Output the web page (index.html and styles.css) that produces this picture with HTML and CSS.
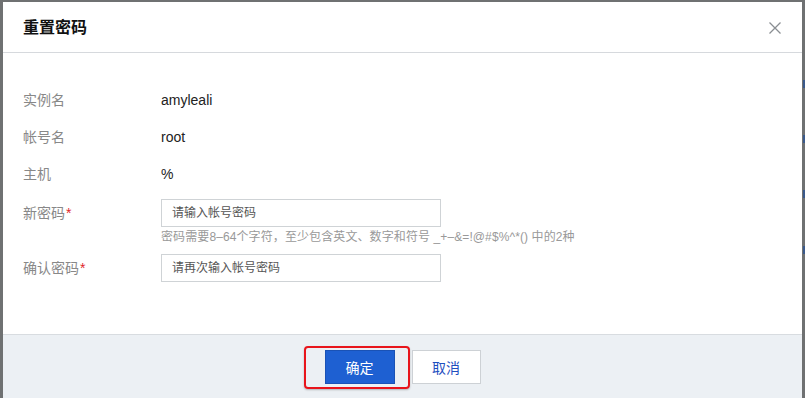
FILE: index.html
```html
<!DOCTYPE html>
<html lang="zh">
<head>
<meta charset="utf-8">
<title>重置密码</title>
<link rel="stylesheet" href="styles.css">
</head>
<body>
<div class="frame">
  <div class="dialog">
    <div class="dialog-header">
      <h1 class="dialog-title">重置密码</h1>
      <button class="close-btn" aria-label="关闭">
        <svg width="12" height="12" viewBox="0 0 12 12"><path d="M0.5 0.5 L11.5 11.5 M11.5 0.5 L0.5 11.5" stroke="#8a8e92" stroke-width="1.3" fill="none"/></svg>
      </button>
    </div>
    <div class="dialog-body">
      <div class="row">
        <div class="label">实例名</div>
        <div class="value">amyleali</div>
      </div>
      <div class="row">
        <div class="label">帐号名</div>
        <div class="value">root</div>
      </div>
      <div class="row">
        <div class="label">主机</div>
        <div class="value">%</div>
      </div>
      <div class="row row-input">
        <div class="label">新密码<span class="req">*</span></div>
        <div class="field">
          <div class="input"><span class="placeholder">请输入帐号密码</span></div>
          <div class="hint">密码需要8–64个字符，至少包含英文、数字和符号 _+–&amp;=!@#$%^*() 中的2种</div>
        </div>
      </div>
      <div class="row row-input">
        <div class="label">确认密码<span class="req">*</span></div>
        <div class="field">
          <div class="input"><span class="placeholder">请再次输入帐号密码</span></div>
        </div>
      </div>
    </div>
    <div class="dialog-footer">
      <div class="btn-wrap">
        <button class="btn btn-primary">确定</button>
        <span class="highlight"></span>
      </div>
      <button class="btn btn-default">取消</button>
    </div>
  </div>
  <div class="side-strip">
    <span class="mark m1"></span>
    <span class="mark m2"></span>
    <span class="mark m3"></span>
    <span class="mark m4"></span>
  </div>
</div>
</body>
</html>
```

FILE: styles.css
```css
* { box-sizing: border-box; }
html, body {
  margin: 0;
  padding: 0;
  height: 100%;
  overflow: hidden;
}
body {
  background: #6f7172;
  font-family: "Liberation Sans", "Noto Sans CJK SC", sans-serif;
  color: #222;
}
.frame {
  display: flex;
  height: 398px;
  padding: 2px 0 0 3px;
}
.dialog {
  width: 799px;
  background: #fff;
  display: flex;
  flex-direction: column;
}
.dialog-header {
  height: 51px;
  border-bottom: 1px solid #d6d9dd;
  display: flex;
  align-items: center;
  justify-content: space-between;
  padding: 0 21px 0 20px;
  flex-shrink: 0;
}
.dialog-title {
  margin: 0;
  font-size: 16px;
  font-weight: bold;
  color: #111;
  line-height: 20px;
  padding-top: 1px;
}
.close-btn {
  border: 0;
  background: none;
  padding: 0;
  width: 12px;
  height: 12px;
  display: flex;
  margin-top: 1px;
}
.dialog-body {
  padding: 37px 20px 0 20px;
  height: 281px;
  flex-shrink: 0;
}
.row {
  display: flex;
  font-size: 14px;
  line-height: 20px;
  margin-bottom: 17px;
}
.label {
  width: 138px;
  color: #888;
  flex-shrink: 0;
}
.value {
  color: #222;
}
.req {
  color: #e0262a;
  margin-left: 1px;
}
.row-input {
  margin-bottom: 0;
}
.row-input + .row-input {
  margin-top: 8px;
}
.row:nth-child(3) {
  margin-bottom: 15px;
}
.row-input .label {
  padding-top: 4px;
}
.input {
  width: 280px;
  height: 28px;
  border: 1px solid #cfd3d6;
  display: flex;
  align-items: center;
  padding-left: 10px;
  background: #fff;
}
.placeholder {
  font-size: 12px;
  color: #555;
}
.hint {
  font-size: 12px;
  line-height: 18px;
  color: #999;
  margin-top: 1px;
  white-space: nowrap;
  letter-spacing: 0.1px;
}
.dialog-footer {
  flex: 1;
  background: #ecf0f4;
  border-top: 1px solid #d8dce0;
  display: flex;
  justify-content: center;
  align-items: flex-start;
  padding-top: 15px;
  gap: 17px;
}
.btn-wrap {
  position: relative;
  display: flex;
}
.btn {
  font-family: "Liberation Sans", "Noto Sans CJK SC", sans-serif;
  font-size: 14px;
  height: 34px;
  padding: 0;
  cursor: pointer;
}
.btn-primary {
  width: 70px;
  background: #1e60d2;
  border: 1px solid #1a52b5;
  color: #fff;
}
.btn-default {
  width: 69px;
  background: #fff;
  border: 1px solid #cdd1d5;
  color: #1f4fbf;
}
.highlight {
  position: absolute;
  left: -21px;
  right: -15px;
  top: -4px;
  bottom: -5px;
  border: 2px solid #e8141b;
  border-radius: 4px;
  box-shadow: 0 1px 2px rgba(0,0,0,0.25);
  pointer-events: none;
}
.side-strip {
  position: relative;
  flex: 1;
}
.mark {
  position: absolute;
  left: 1px;
  width: 2px;
  height: 8px;
  background: #3a5a8c;
}
.m1 { top: 78px; }
.m2 { top: 133px; }
.m3 { top: 188px; }
.m4 { top: 244px; }
```
